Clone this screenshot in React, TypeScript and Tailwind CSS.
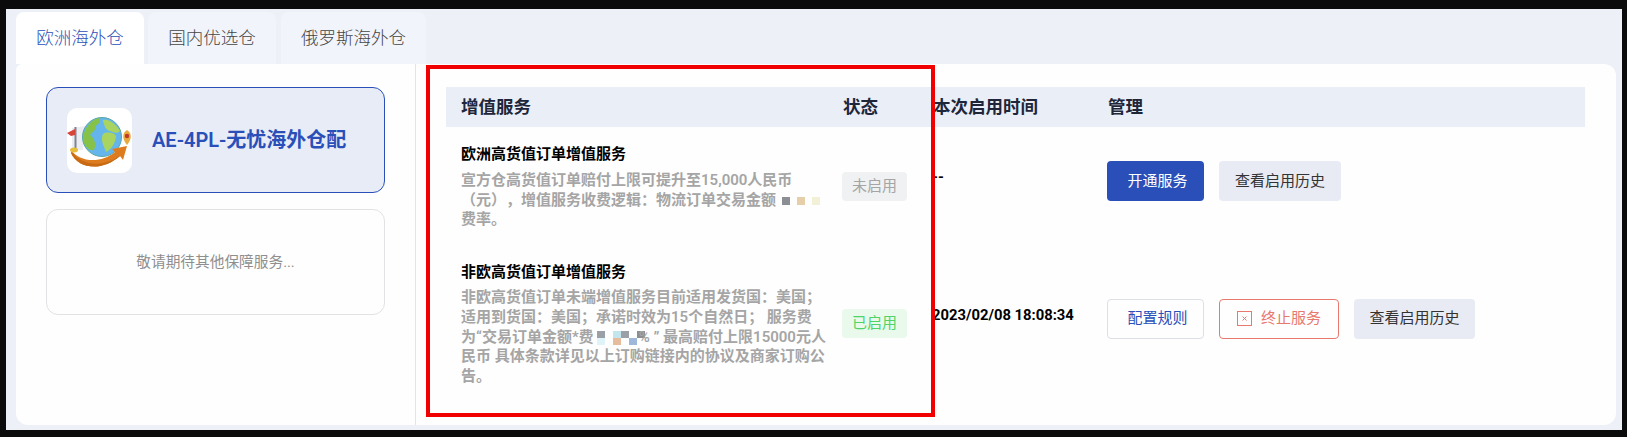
const blue = "text-[#2a4fb8]";

function GlobeLogo() {
  return (
    <svg width="65" height="65" viewBox="0 0 65 65">
      <rect width="65" height="65" rx="10" fill="#ffffff" />
      <path d="M5 20 L18 18 L16 42 L5 42 Z" fill="#e3e6ec" opacity="0.7" />
      <circle cx="35" cy="29" r="19.5" fill="#64b5ec" />
      <circle cx="35" cy="29" r="19.5" fill="none" stroke="#5aa6a8" strokeWidth="1" />
      <path d="M16 30 C17 20 24 12 32 10 C35 13 31 17 28 18 C30 22 25 24 23 27 C27 30 30 36 27 42 C22 44 16 37 16 30 Z" fill="#86c247" />
      <path d="M36 12 C42 10 50 17 53 23 C49 27 45 23 43 23 C39 22 37 18 36 12 Z" fill="#a9d45f" />
      <path d="M36 26 C40 23 48 25 49 28 C49 34 44 42 39 44 C37 38 33 32 36 26 Z" fill="#a9d45f" />
      <path d="M4 42 C12 54 34 56 48 44 L45 41 L60 38 L56 52 L53 48 C36 63 12 62 4 45 Z" fill="#dd7c1e" />
      <path d="M6 45 C14 57 36 60 52 48 L53 48 C36 63 12 62 4 45 Z" fill="#c96a14" />
      <rect x="7.5" y="19" width="2" height="23" fill="#7f8590" />
      <path d="M8 21 L0 25 L4 28 L8 27 Z" fill="#d8443a" />
      <ellipse cx="7" cy="42" rx="4" ry="2.5" fill="#e6bd3c" />
      <path d="M60 37 C55 31 55 25 60 22 C65 25 65 31 60 37 Z" fill="#eaa93c" />
      <circle cx="60" cy="28" r="2.2" fill="#c0392b" />
    </svg>
  );
}

function StopIcon() {
  return (
    <svg width="15" height="15" viewBox="0 0 15 15" fill="none" stroke="#e8796f" strokeWidth="1">
      <rect x="0.5" y="0.5" width="14" height="14" />
      <path d="M5.5 5.5 L9.5 9.5 M9.5 5.5 L5.5 9.5" />
    </svg>
  );
}

// smudged pixels that hide the rate in the screenshot
function Blot({ className }: { className: string }) {
  return <span className={`inline-block w-[8px] h-[8px] ${className}`} />;
}

function MosaicColumn({ top, bottom }: { top: string; bottom: string }) {
  return (
    <span className="inline-flex flex-col w-[8px]">
      <span className={`h-[7px] ${top}`} />
      <span className={`h-[7px] ${bottom}`} />
    </span>
  );
}

export default function App() {
  return (
    <div className="w-[1627px] h-[437px] overflow-hidden bg-[#0b0b0b] pt-[9px] pl-[6px] pr-[5px] pb-[7px] font-['Roboto','Noto_Sans_CJK_SC',sans-serif]">
      <div className="relative h-full bg-[#edf0f7] pl-[10px] pr-[6px] pt-[3px] pb-[5px] flex flex-col">
        {/* tabs */}
        <div className="flex h-[52px] shrink-0">
          <button className={`w-[128px] rounded-t-lg bg-white text-[17.5px] font-light ${blue}`}>欧洲海外仓</button>
          <button className="ml-[4px] w-[128px] rounded-t-lg bg-[#f1f4fa] text-[17.5px] font-light text-[#444]">国内优选仓</button>
          <button className="ml-[5px] w-[145px] rounded-t-lg bg-[#f1f4fa] text-[17.5px] font-light text-[#444]">俄罗斯海外仓</button>
        </div>

        {/* panel */}
        <div className="flex flex-1 bg-[#fefefe] rounded-b-xl rounded-tr-xl rounded-tl-[6px]">
          <aside className="w-[400px] shrink-0 border-r border-[#e4e4e6] pl-[30px] pr-[30px] pt-[23px] flex flex-col gap-[16px]">
            <div className="h-[106px] rounded-xl border border-[#2a4fb8] bg-[#e8ecf6] flex items-center pl-[20px] gap-[20px]">
              <GlobeLogo />
              <span className={`text-[20px] font-semibold whitespace-nowrap ${blue}`}>AE-4PL-无忧海外仓配</span>
            </div>
            <div className="h-[106px] rounded-xl border border-[#e2e2e4] flex items-center justify-center text-[14.7px] text-[#8f8f8f]">
              敬请期待其他保障服务...
            </div>
          </aside>

          <section className="flex-1 pl-[30px] pr-[31px] pt-[23px]">
            <div className="grid grid-cols-[397px_90px_175px_1fr] h-[40px] items-center bg-[#eaeef6] text-[17.5px] font-semibold text-[#20263a]">
              <div className="pl-[15px]">增值服务</div>
              <div>状态</div>
              <div>本次启用时间</div>
              <div>管理</div>
            </div>

            <div className="grid grid-cols-[396px_90px_175px_1fr] h-[118px] items-center">
              <div className="pl-[15px] pt-[17px] pb-[15px]">
                <div className="text-[15px] leading-[20px] font-semibold text-black">欧洲高货值订单增值服务</div>
                <div className="mt-[7px] text-[15px] leading-[19.7px] font-semibold text-[#a5a5a5] whitespace-nowrap [text-spacing-trim:space-all]">
                  宣方仓高货值订单赔付上限可提升至15,000人民币
                  <br />
                  （元），增值服务收费逻辑：物流订单交易金额
                  <span className="ml-[6px] inline-flex gap-[7px]">
                    <Blot className="bg-[#8b8e92]" />
                    <Blot className="bg-[#e6cfa8]" />
                    <Blot className="bg-[#f3f0d8]" />
                  </span>
                  <br />
                  费率。
                </div>
              </div>
              <div>
                <span className="flex items-center justify-center w-[65px] h-[29px] rounded bg-[#eff1f2] text-[15px] text-[#a5a5a5]">未启用</span>
              </div>
              <div className="pb-[18px] text-[15px] font-bold text-black">--</div>
              <div className="flex gap-[15px] pb-[10px]">
                <button className="w-[97px] h-[40px] pl-[4px] rounded bg-[#2a4fb8] text-[15px] text-white">开通服务</button>
                <button className="w-[122px] h-[40px] rounded bg-[#e8ebf4] text-[15px] text-[#333]">查看启用历史</button>
              </div>
            </div>

            <div className="grid grid-cols-[396px_90px_175px_1fr] h-[157px] items-center">
              <div className="pl-[15px] pt-[17px] pb-[15px]">
                <div className="text-[15px] leading-[20px] font-semibold text-black">非欧高货值订单增值服务</div>
                <div className="mt-[6px] text-[15px] leading-[19.8px] font-semibold text-[#a5a5a5] whitespace-nowrap">
                  非欧高货值订单未端增值服务目前适用发货国：美国；
                  <br />
                  适用到货国：美国；承诺时效为15个自然日； 服务费
                  <br />
                  为“交易订单金额*费
                  <span className="inline-flex align-middle ml-[3px]">
                    <MosaicColumn top="bg-[#9aa0a6]" bottom="bg-[#dff4f8]" />
                    <span className="w-[8px]" />
                    <MosaicColumn top="bg-[#c3e6ee]" bottom="bg-[#e6bd9c]" />
                    <MosaicColumn top="bg-[#9aa0a6]" bottom="bg-white" />
                    <MosaicColumn top="bg-white" bottom="bg-[#9db8da]" />
                    <MosaicColumn top="bg-[#8b8e92]" bottom="bg-white" />
                  </span>
                  <span className="ml-[-6px]">%</span> ” 最高赔付上限15000元人
                  <br />
                  民币 具体条款详见以上订购链接内的协议及商家订购公
                  <br />
                  告。
                </div>
              </div>
              <div>
                <span className="flex items-center justify-center w-[65px] h-[29px] rounded bg-[#e9f9ec] text-[15px] text-[#4fd567]">已启用</span>
              </div>
              <div className="pb-[16px] text-[14.8px] font-bold text-black whitespace-nowrap">2023/02/08 18:08:34</div>
              <div className="flex gap-[15px] pb-[10px]">
                <button className={`w-[97px] h-[40px] pl-[4px] rounded border border-[#dcdfe6] text-[15px] ${blue}`}>配置规则</button>
                <button className="w-[120px] h-[40px] rounded border border-[#e8796f] text-[15px] text-[#e8796f] flex items-center justify-center gap-[9px]">
                  <StopIcon />
                  终止服务
                </button>
                <button className="w-[121px] h-[40px] rounded bg-[#e8ebf4] text-[15px] text-[#333]">查看启用历史</button>
              </div>
            </div>
          </section>
        </div>

        {/* annotation */}
        <div className="absolute left-[420px] top-[56px] w-[509px] h-[352px] border-[4px] border-[#f00000]" />
      </div>
    </div>
  );
}
